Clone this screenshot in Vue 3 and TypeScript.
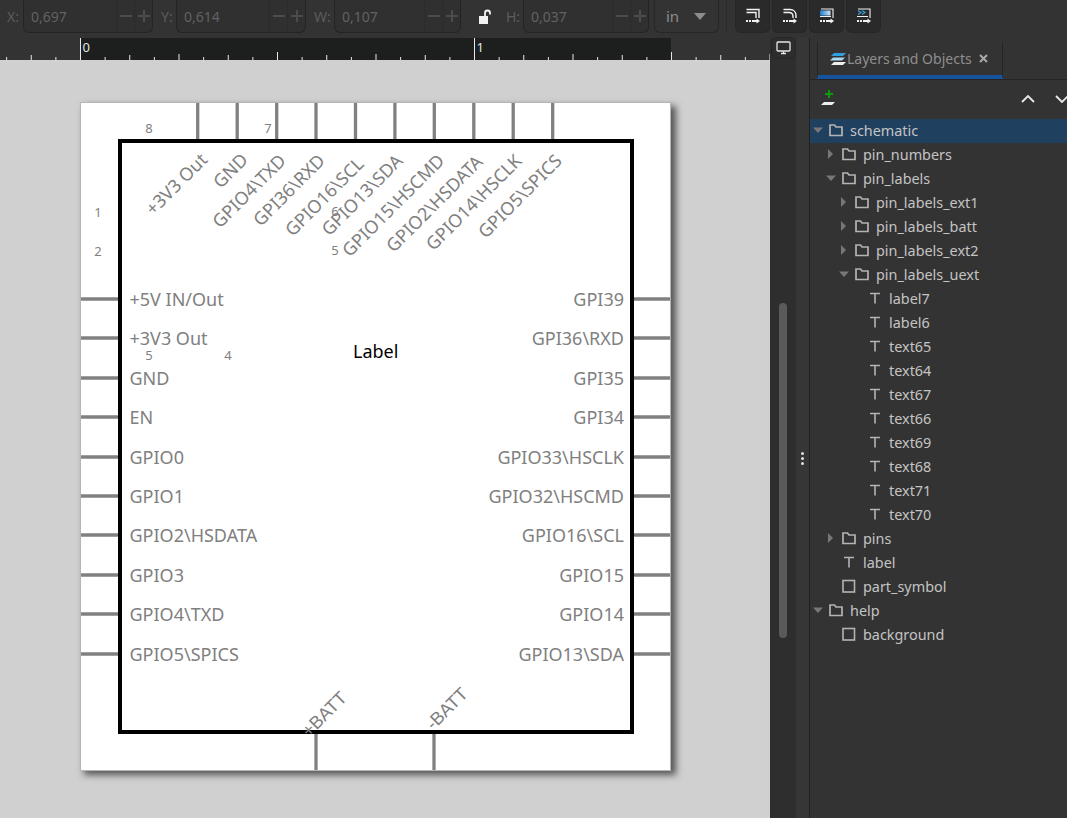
<script setup lang="ts">
interface TreeRow {
  name: string
  depth: number
  kind: 'folder' | 'text' | 'rect'
  arrow?: 'open' | 'closed'
  selected?: boolean
}

const fields = [
  { label: 'X:', value: '0,697', cls: 'f-x' },
  { label: 'Y:', value: '0,614', cls: 'f-y' },
  { label: 'W:', value: '0,107', cls: 'f-w' },
]

const rows: TreeRow[] = [
  { name: 'schematic', depth: 0, kind: 'folder', arrow: 'open', selected: true },
  { name: 'pin_numbers', depth: 1, kind: 'folder', arrow: 'closed' },
  { name: 'pin_labels', depth: 1, kind: 'folder', arrow: 'open' },
  { name: 'pin_labels_ext1', depth: 2, kind: 'folder', arrow: 'closed' },
  { name: 'pin_labels_batt', depth: 2, kind: 'folder', arrow: 'closed' },
  { name: 'pin_labels_ext2', depth: 2, kind: 'folder', arrow: 'closed' },
  { name: 'pin_labels_uext', depth: 2, kind: 'folder', arrow: 'open' },
  ...['label7', 'label6', 'text65', 'text64', 'text67', 'text66', 'text69', 'text68', 'text71', 'text70'].map(
    (name): TreeRow => ({ name, depth: 3, kind: 'text' }),
  ),
  { name: 'pins', depth: 1, kind: 'folder', arrow: 'closed' },
  { name: 'label', depth: 1, kind: 'text' },
  { name: 'part_symbol', depth: 1, kind: 'rect' },
  { name: 'help', depth: 0, kind: 'folder', arrow: 'open' },
  { name: 'background', depth: 1, kind: 'rect' },
]

// ruler ticks, 1in = 394px
const ticks: { x: number; h: number }[] = []
for (let i = -4; i <= 56; i++) {
  const x = 80 + i * 24.625
  let h = 3
  if (i % 16 === 0) h = 22
  else if (i % 8 === 0) h = 8
  else if (i % 4 === 0) h = 6
  else if (i % 2 === 0) h = 5
  ticks.push({ x, h })
}

const topPins = [197.7, 237.2, 276.7, 316, 355.5, 394.9, 434.3, 473.8, 513.2, 552.7]
const sidePins = [299, 338, 378, 417, 457, 496, 535, 575, 614, 654]
const leftLabels = ['+5V IN/Out', '+3V3 Out', 'GND', 'EN', 'GPIO0', 'GPIO1', 'GPIO2\\HSDATA', 'GPIO3', 'GPIO4\\TXD', 'GPIO5\\SPICS']
const rightLabels = ['GPI39', 'GPI36\\RXD', 'GPI35', 'GPI34', 'GPIO33\\HSCLK', 'GPIO32\\HSCMD', 'GPIO16\\SCL', 'GPIO15', 'GPIO14', 'GPIO13\\SDA']
const topLabels = [
  { t: '+3V3 Out', x: 208.5, y: 161 },
  { t: 'GND', x: 249, y: 161 },
  { t: 'GPIO4\\TXD', x: 287, y: 162 },
  { t: 'GPI36\\RXD', x: 326, y: 162 },
  { t: 'GPIO16\\SCL', x: 365, y: 165 },
  { t: 'GPIO13\\SDA', x: 404, y: 162 },
  { t: 'GPIO15\\HSCMD', x: 445.5, y: 162 },
  { t: 'GPIO2\\HSDATA', x: 484, y: 163 },
  { t: 'GPIO14\\HSCLK', x: 523, y: 162 },
  { t: 'GPIO5\\SPICS', x: 563, y: 162 },
]
const numbers = [
  { t: '8', x: 149, y: 133 },
  { t: '7', x: 268, y: 133 },
  { t: '1', x: 98, y: 217 },
  { t: '2', x: 98, y: 256 },
  { t: '6', x: 335, y: 216 },
  { t: '5', x: 335, y: 255 },
  { t: '5', x: 149, y: 360 },
  { t: '4', x: 228, y: 360 },
]
</script>

<template>
  <div class="app">
    <header class="toolbar">
      <template v-for="f in fields" :key="f.label">
        <span class="lbl" :class="f.cls">{{ f.label }}</span>
        <div class="spin" :class="f.cls">
          <span class="val">{{ f.value }}</span>
          <span class="pm">
            <svg width="14" height="14" viewBox="0 0 14 14"><path d="M1 7h12" /></svg>
          </span>
          <span class="pm">
            <svg width="14" height="14" viewBox="0 0 14 14"><path d="M1 7h12M7 1v12" /></svg>
          </span>
        </div>
      </template>
      <svg class="lock" width="14" height="16" viewBox="0 0 14 16">
        <path d="M1 7h9v8H1z" fill="#f2f2f2" />
        <path d="M7 7V4a2.5 2.5 0 0 1 5 0v1.5" fill="none" stroke="#f2f2f2" stroke-width="1.8" />
      </svg>
      <span class="lbl f-h">H:</span>
      <div class="spin f-h">
        <span class="val">0,037</span>
        <span class="pm"><svg width="14" height="14" viewBox="0 0 14 14"><path d="M1 7h12" /></svg></span>
        <span class="pm"><svg width="14" height="14" viewBox="0 0 14 14"><path d="M1 7h12M7 1v12" /></svg></span>
      </div>
      <div class="unit">
        <span>in</span>
        <svg width="12" height="7" viewBox="0 0 12 7"><path d="M0 0h12L6 7z" fill="#8c8c8c" /></svg>
      </div>
      <i class="sep"></i>
      <button v-for="n in 4" :key="n" class="tool">
        <svg width="20" height="20" viewBox="0 0 20 20">
          <defs>
            <linearGradient id="pasteFill" x1="0" y1="0" x2="1" y2="0">
              <stop offset="0" stop-color="#1b7ecf" />
              <stop offset="1" stop-color="#cfe6f7" />
            </linearGradient>
          </defs>
          <g fill="none" stroke="#f2f2f2">
            <path v-if="n === 1" d="M3.5 3.500H16V12M3.500 6.500H13V12" stroke-width="1.400" />
            <path v-if="n === 2" d="M3.500 3.500H10c3.500 0 6 2.500 6 6V12M3.500 6.500H9c2.500 0 4 1.500 4 4V12" stroke-width="1.400" />
            <template v-if="n === 3">
              <path d="M4 3H16V12" stroke-width="1.100" />
              <path d="M3 4.500h10.500v5H3z" fill="url(#pasteFill)" stroke="none" />
              <path d="M3 10.500h11" stroke-width="1" />
            </template>
            <template v-if="n === 4">
              <path d="M4 3H16V12" stroke-width="1.100" />
              <path d="M4 4.500l3 2-3 2M8 4.500l3 2-3 2" stroke="#3aa0e0" stroke-width="1.200" />
              <path d="M3 10.500h11" stroke-width="1" />
            </template>
            <path d="M3 15h2M6 15h2M9 15h5" stroke-width="1.800" />
          </g>
          <path d="M13.500 12.500L17 15l-3.500 2.500z" fill="#f2f2f2" />
        </svg>
      </button>
    </header>

    <div class="main">
      <section class="work">
        <div class="doc">
          <svg class="ruler" width="770" height="23" viewBox="0 0 770 23">
            <rect x="80" y="0" width="591" height="22" fill="#1d1f1f" />
            <line v-for="(k, i) in ticks" :key="i" :x1="k.x + 0.5" :x2="k.x + 0.5" y1="22" :y2="22 - k.h" stroke="#e8e8e8" />
            <rect x="0" y="22" width="770" height="1" fill="#f0f0f0" />
            <text x="82.500" y="14" class="ruler-num">0</text>
            <text x="476.500" y="14" class="ruler-num">1</text>
          </svg>
          <svg class="canvas" width="770" height="758" viewBox="0 60 770 758">
            <defs>
              <filter id="pg" x="-10%" y="-10%" width="120%" height="120%">
                <feGaussianBlur stdDeviation="3.500" />
              </filter>
            </defs>
            <rect x="84" y="106" width="592" height="669" fill="#555" filter="url(#pg)" />
            <rect x="80.500" y="102.500" width="590" height="668" fill="#fff" stroke="#b5b5b5" />

            <line v-for="x in topPins" :key="x" :x1="x" :x2="x" y1="103" y2="141" class="pin" />
            <template v-for="y in sidePins" :key="y">
              <line x1="81" x2="120" :y1="y" :y2="y" class="pin" />
              <line x1="632" x2="670" :y1="y" :y2="y" class="pin" />
            </template>
            <line x1="316" x2="316" y1="732" y2="770" class="pin" />
            <line x1="434" x2="434" y1="732" y2="770" class="pin" />

            <rect x="120" y="141" width="512" height="591" fill="none" stroke="#000" stroke-width="4" />

            <text v-for="(l, i) in leftLabels" :key="l" x="129.500" :y="sidePins[i] + 6.500" class="pl">{{ l }}</text>
            <text v-for="(l, i) in rightLabels" :key="l" x="624" :y="sidePins[i] + 6.500" class="pl end">{{ l }}</text>
            <text
              v-for="l in topLabels"
              :key="l.t"
              :x="l.x"
              :y="l.y"
              class="pl end"
              :transform="`rotate(-45 ${l.x} ${l.y})`"
            >{{ l.t }}</text>
            <text x="348" y="699" class="pl end batt" transform="rotate(-45 348 699)">+BATT</text>
            <text x="469" y="695" class="pl end batt" transform="rotate(-45 469 695)">-BATT</text>
            <text v-for="(n, i) in numbers" :key="i" :x="n.x" :y="n.y" class="num">{{ n.t }}</text>
            <text x="353" y="358" class="mid">Label</text>
          </svg>
        </div>
        <div class="strip">
          <div class="corner">
            <svg width="15" height="14" viewBox="0 0 15 14">
              <rect x="1" y="1" width="13" height="9" rx="1" fill="none" stroke="#e8e8e8" stroke-width="1.300" />
              <path d="M5 12.500h5M7.500 10.500v2" stroke="#e8e8e8" stroke-width="1.300" />
            </svg>
          </div>
          <div class="thumb"></div>
        </div>
        <div class="grip"><i></i><i></i><i></i></div>
      </section>

      <aside class="panel">
        <div class="tabs">
          <div class="tab">
            <svg width="16" height="14" viewBox="0 0 16 14">
              <path d="M4 1h12l-3 3H1z" fill="#2f9fe0" />
              <path d="M3 5.500h12l-3 3H0z" fill="#a8d8f0" />
              <path d="M4 10h12l-3 3H1z" fill="#eeeeee" />
            </svg>
            <span>Layers and Objects</span>
            <svg class="close" width="9" height="9" viewBox="0 0 9 9"><path d="M1 1l7 7M8 1l-7 7" stroke="#a8a8a8" stroke-width="2" /></svg>
          </div>
        </div>
        <div class="actions">
          <svg class="add" width="14" height="16" viewBox="0 0 14 16">
            <path d="M8 0v8M4 4h8" stroke="#0a9a0a" stroke-width="2" />
            <path d="M3 12h11l-3 3H0z" fill="#eee" />
          </svg>
          <svg class="up" width="14" height="8" viewBox="0 0 14 8"><path d="M1 7l6-6 6 6" fill="none" stroke="#e8e8e8" stroke-width="1.800" /></svg>
          <svg class="down" width="14" height="8" viewBox="0 0 14 8"><path d="M1 1l6 6 6-6" fill="none" stroke="#e8e8e8" stroke-width="1.800" /></svg>
        </div>
        <ul class="tree">
          <li
            v-for="r in rows"
            :key="r.name"
            class="row"
            :class="{ selected: r.selected }"
            :style="{ paddingLeft: 3 + r.depth * 13 + 'px' }"
          >
            <span class="arrow">
              <svg v-if="r.arrow === 'open'" width="10" height="10" viewBox="0 0 10 10"><path d="M0 2.500h10L5 8z" fill="#777" /></svg>
              <svg v-else-if="r.arrow === 'closed'" width="10" height="10" viewBox="0 0 10 10"><path d="M2 0v10L7 5z" fill="#777" /></svg>
            </span>
            <svg class="ico" width="14" height="14" viewBox="0 0 14 14">
              <path v-if="r.kind === 'folder'" d="M1 2h4.500l1.500 2h6v8.500H1z" fill="none" stroke="#b4b4b4" stroke-width="1.700" />
              <path v-else-if="r.kind === 'text'" d="M2 2.500h10M7 2.500v10" fill="none" stroke="#b4b4b4" stroke-width="1.600" />
              <rect v-else x="1" y="1.500" width="11.500" height="11.500" fill="none" stroke="#b4b4b4" stroke-width="1.600" />
            </svg>
            <span class="name">{{ r.name }}</span>
          </li>
        </ul>
      </aside>
    </div>
  </div>
</template>

<style scoped>
.app {
  width: 1067px;
  height: 818px;
  display: flex;
  flex-direction: column;
  overflow: hidden;
  background: #333333;
  font-family: "Noto Sans", sans-serif;
}

.toolbar {
  height: 38px;
  flex: none;
  display: flex;
  align-items: flex-start;
  background: #333333;
  color: #5c5c5c;
  font-size: 14px;
  box-sizing: border-box;
  padding-left: 7px;
}

.lbl {
  width: 16px;
  line-height: 33px;
  flex: none;
}

.lbl.f-y { margin-left: 8px; width: 15px; }
.lbl.f-w { margin-left: 8px; width: 20px; }
.lbl.f-h { margin-left: 14px; width: 17px; }

.spin {
  height: 33px;
  width: 130px;
  display: flex;
  align-items: center;
  box-sizing: border-box;
  border: 1px solid #242424;
  border-top: 0;
  border-radius: 0 0 6px 6px;
  background: #303030;
  flex: none;
}

.spin.f-w { width: 127px; }
.spin.f-h { width: 126px; }

.val {
  flex: 1;
  padding-left: 7px;
  color: #626262;
}

.pm {
  width: 17px;
  height: 100%;
  display: flex;
  align-items: center;
  justify-content: center;
  border-left: 1px solid #2b2b2b;
}

.pm svg path {
  stroke: #4c4c4c;
  stroke-width: 2;
  fill: none;
}

.lock {
  margin: 9px 0 0 17px;
  flex: none;
}

.unit {
  margin-left: 5px;
  width: 65px;
  height: 33px;
  flex: none;
  box-sizing: border-box;
  border: 1px solid #262626;
  border-top: 0;
  border-radius: 0 0 6px 6px;
  display: flex;
  align-items: center;
  justify-content: space-between;
  padding: 0 12px 0 11px;
  color: #8c8c8c;
  font-size: 15px;
}

.sep {
  width: 1px;
  height: 33px;
  margin: 0 8px 0 7px;
  background: #2a2a2a;
  flex: none;
}

.tool {
  width: 35px;
  height: 33px;
  margin-right: 2px;
  padding: 0;
  flex: none;
  border: 1px solid #262626;
  border-top: 0;
  border-radius: 0 0 6px 6px;
  background: #2a2a2a;
  display: flex;
  align-items: center;
  justify-content: center;
}

.main {
  flex: 1;
  display: flex;
  min-height: 0;
}

.work {
  display: flex;
  width: 810px;
  flex: none;
}

.doc {
  width: 770px;
  flex: none;
  display: flex;
  flex-direction: column;
}

.ruler,
.canvas {
  display: block;
  flex: none;
}

.canvas {
  background: #d0d0d0;
  margin-top: -1px;
}

.ruler-num {
  font-size: 13px;
  fill: #dfe6ea;
}

.pin {
  stroke: #808080;
  stroke-width: 3.300;
}

.pl {
  font-size: 18px;
  fill: #808080;
}

.end {
  text-anchor: end;
}

.batt {
  font-size: 18px;
  font-family: "Liberation Sans", sans-serif;
}

.num {
  font-size: 13px;
  fill: #808080;
  text-anchor: middle;
}

.mid {
  font-size: 18px;
  fill: #000000;
}

.strip {
  width: 26px;
  flex: none;
  background: #2e2e2e;
  position: relative;
}

.corner {
  position: absolute;
  left: 1px;
  top: -1px;
  width: 25px;
  height: 22px;
  box-sizing: border-box;
  border: 1px solid #262626;
  border-radius: 6px;
  background: #2d2d2d;
  display: flex;
  align-items: center;
  justify-content: center;
}

.thumb {
  position: absolute;
  left: 9px;
  top: 265px;
  width: 8px;
  height: 335px;
  border-radius: 4px;
  background: #5a5a5a;
}

.grip {
  width: 14px;
  flex: none;
  box-sizing: border-box;
  border-right: 1px solid #202020;
  display: flex;
  flex-direction: column;
  align-items: center;
  justify-content: center;
  gap: 2px;
  padding-right: 1px;
  padding-top: 60px;
  background: #363636;
}

.grip i {
  width: 3px;
  height: 3px;
  border-radius: 50%;
  background: #e0e0e0;
}

.panel {
  flex: 1;
  min-width: 0;
  display: flex;
  flex-direction: column;
  background: #333333;
  overflow: hidden;
}

.tabs {
  height: 42px;
  flex: none;
  padding-left: 7px;
  box-sizing: border-box;
  border-bottom: 1px solid #252525;
  display: flex;
  align-items: flex-end;
}

.tab {
  width: 186px;
  height: 37px;
  box-sizing: border-box;
  border-left: 1px solid #252525;
  border-right: 1px solid #252525;
  border-bottom: 4px solid #15539e;
  display: flex;
  align-items: center;
  gap: 1px;
  padding-left: 12px;
  color: #8e8e8e;
  font-size: 14px;
}

.close {
  margin-left: 6px;
}

.actions {
  height: 39px;
  flex: none;
  position: relative;
}

.add {
  position: absolute;
  left: 11px;
  top: 10px;
}

.up {
  position: absolute;
  left: 211px;
  top: 15px;
}

.down {
  position: absolute;
  left: 245px;
  top: 15px;
}

.tree {
  list-style: none;
  margin: 0;
  padding: 0;
}

.row {
  height: 24px;
  display: flex;
  align-items: center;
  box-sizing: border-box;
  padding-bottom: 2px;
  color: #c4c4c4;
  font-size: 14.400px;
}

.row.selected {
  background: #204060;
}

.arrow {
  width: 16px;
  flex: none;
  display: flex;
  align-items: center;
  justify-content: flex-start;
}

.ico {
  flex: none;
  margin-right: 7px;
}
</style>

<style>
html, body {
  background: #333333;
}
</style>
